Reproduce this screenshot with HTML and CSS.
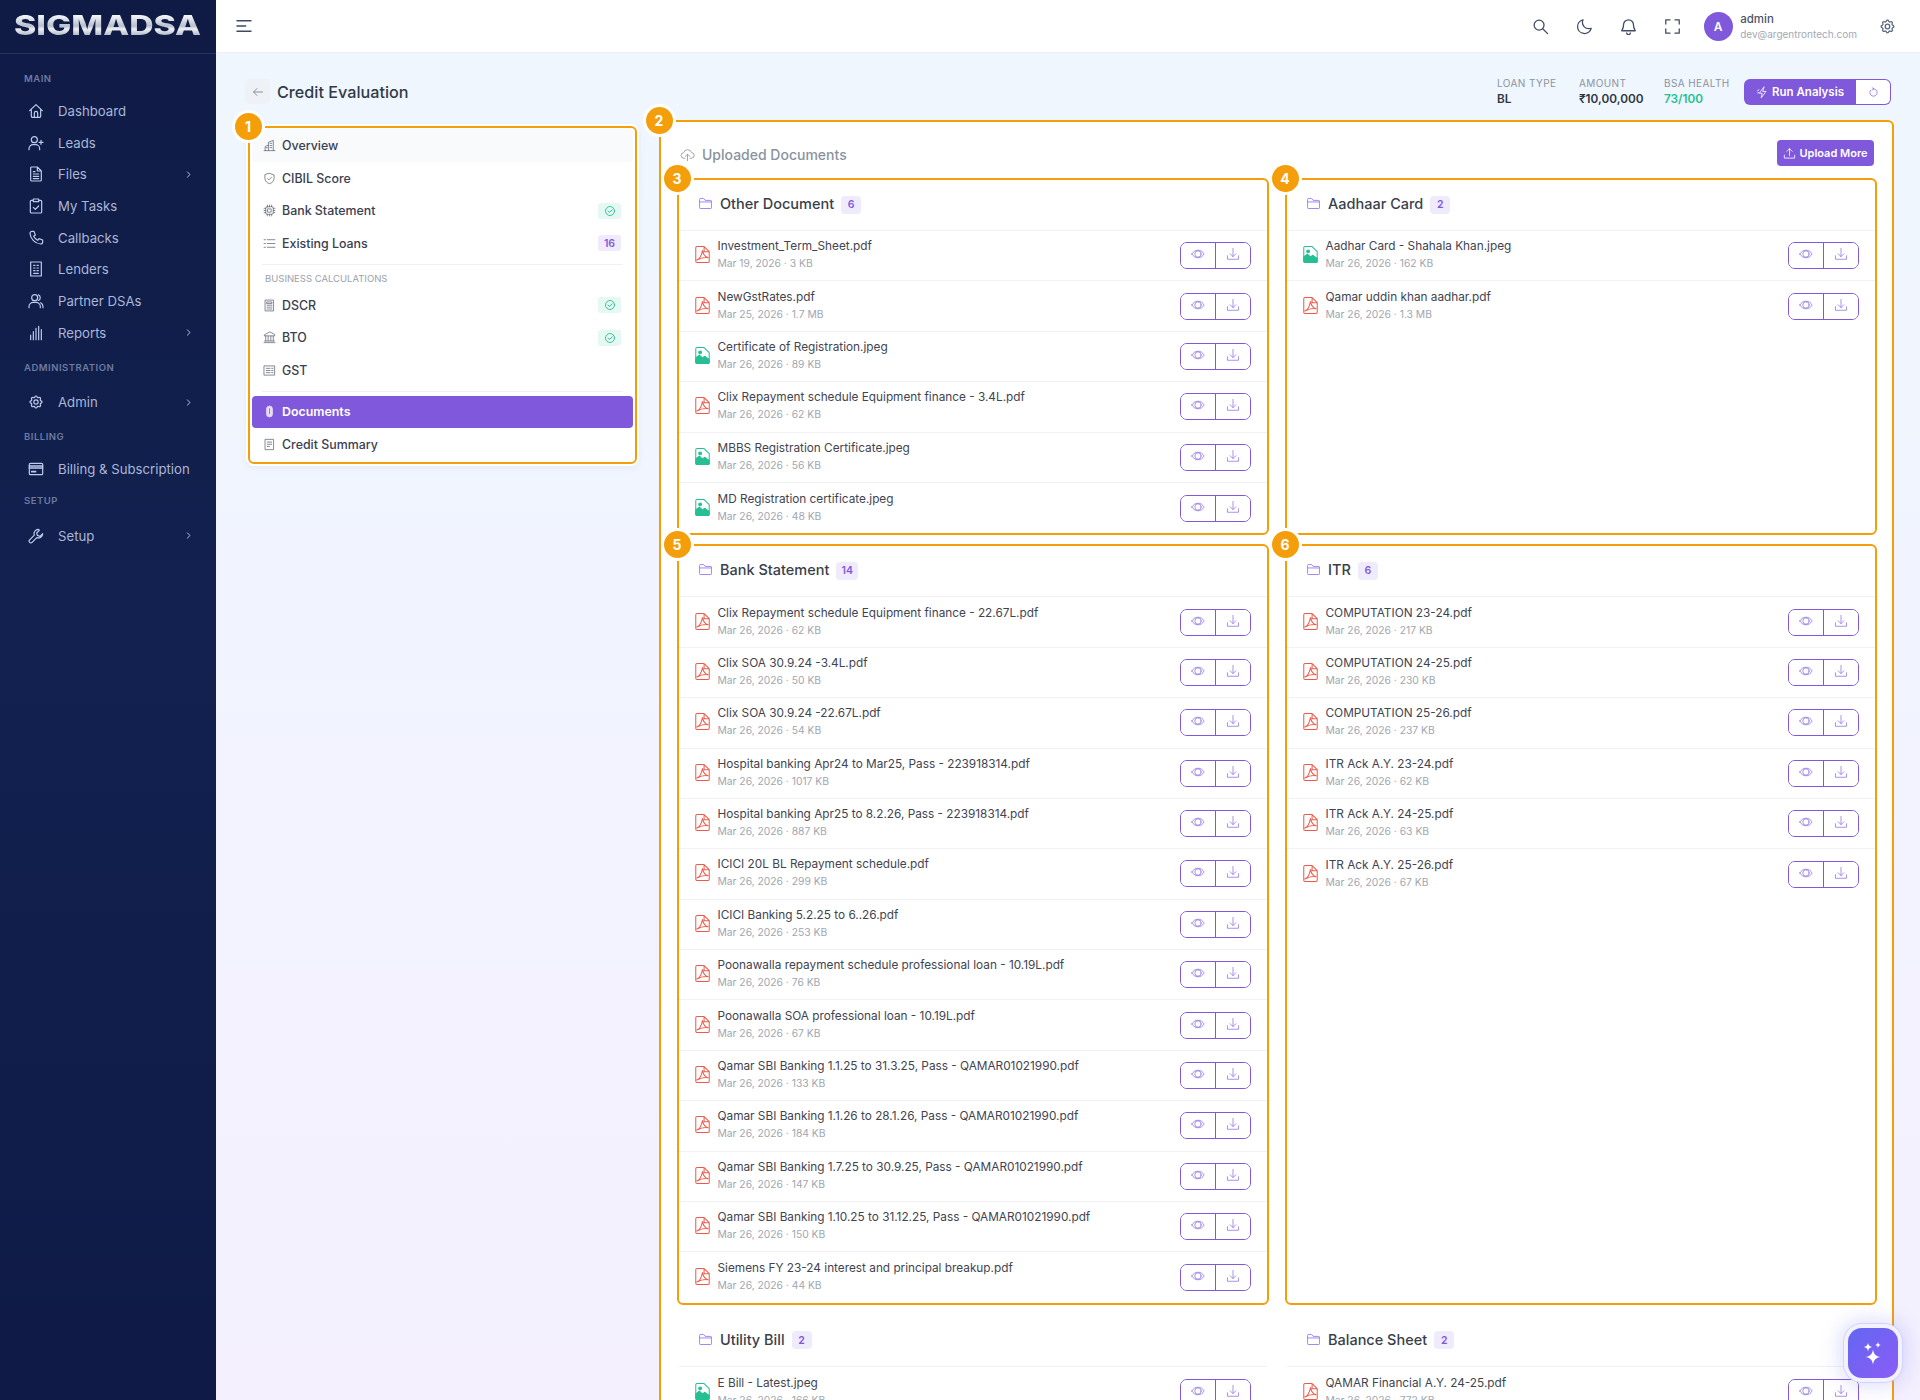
FILE: index.html
```html
<!DOCTYPE html>
<html lang="en">
<head>
    <meta charset="UTF-8">
    <meta name="viewport" content="width=device-width, initial-scale=1.0">
    <title>Credit Evaluation</title>
    <link rel="stylesheet" href="styles.css">
</head>
<body>

<svg class="icon-sprite" xmlns="http://www.w3.org/2000/svg">
    <symbol id="i-home" viewBox="0 0 24 24"><path d="M2.5 11.5 12 2.500l9.500 9M5 9.500V20a1.500 1.500 0 0 0 1.500 1.500h11A1.500 1.500 0 0 0 19 20V9.500M9.500 21.500V15a2.500 2.500 0 0 1 5 0v6.500"/></symbol>
    <symbol id="i-user-plus" viewBox="0 0 24 24"><circle cx="9.500" cy="7" r="4.500"/><path d="M1.500 22v-1.500a6 6 0 0 1 6-6h4a6 6 0 0 1 6 6V22M19.500 8v6M16.500 11h6"/></symbol>
    <symbol id="i-file" viewBox="0 0 24 24"><path d="M14 1.500H5.500A1.500 1.500 0 0 0 4 3v18a1.500 1.500 0 0 0 1.500 1.500h13A1.500 1.500 0 0 0 20 21V7.500zM14 1.500v6h6M8 12h8M8 15.500h8M8 19h8M8 8.500h2.500"/></symbol>
    <symbol id="i-task" viewBox="0 0 24 24"><path d="M8 3.500H5A1.500 1.500 0 0 0 3.500 5v16A1.500 1.500 0 0 0 5 22.500h14a1.500 1.500 0 0 0 1.500-1.500V5A1.500 1.500 0 0 0 19 3.500h-3M8 1.500h8v4H8zM8 14l3 3 5-5"/></symbol>
    <symbol id="i-phone" viewBox="0 0 24 24"><path d="M6 2h3l2 5.500-2.500 2a13 13 0 0 0 6 6l2-2.500 5.500 2v3a3 3 0 0 1-3 3C10.500 20.500 3.500 13.500 3 5a3 3 0 0 1 3-3z"/></symbol>
    <symbol id="i-building" viewBox="0 0 24 24"><path d="M4 1.500h16v21H4zM8.500 6.500h2M13.500 6.500h2M8.500 10.500h2M13.500 10.500h2M8.500 14.500h2M13.500 14.500h2M8.500 18.500h7"/></symbol>
    <symbol id="i-users" viewBox="0 0 24 24"><circle cx="10" cy="7" r="4.500"/><path d="M1.500 22v-1.500a6.500 6.500 0 0 1 6.500-6.500h4a6.500 6.500 0 0 1 6.500 6.500V22M15.500 2.800a4.500 4.500 0 0 1 0 8.400M19 14.500a6.500 6.500 0 0 1 3.500 6V22"/></symbol>
    <symbol id="i-bars" viewBox="0 0 24 24"><path d="M4 22v-7M8 22V10M12 22V5M16 22V2M20 22V7"/></symbol>
    <symbol id="i-gear" viewBox="0 0 24 24"><path d="M10.325 4.317c.426-1.756 2.924-1.756 3.350 0a1.724 1.724 0 0 0 2.573 1.066c1.543-.94 3.310.826 2.370 2.370a1.724 1.724 0 0 0 1.065 2.572c1.756.426 1.756 2.924 0 3.350a1.724 1.724 0 0 0-1.066 2.573c.94 1.543-.826 3.310-2.370 2.370a1.724 1.724 0 0 0-2.572 1.065c-.426 1.756-2.924 1.756-3.350 0a1.724 1.724 0 0 0-2.573-1.066c-1.543.94-3.310-.826-2.370-2.370a1.724 1.724 0 0 0-1.065-2.572c-1.756-.426-1.756-2.924 0-3.350a1.724 1.724 0 0 0 1.066-2.573c-.94-1.543.826-3.310 2.370-2.370 1 .608 2.296.07 2.572-1.065z"/><circle cx="12" cy="12" r="3.200"/></symbol>
    <symbol id="i-card" viewBox="0 0 24 24"><rect x="2" y="3.500" width="20" height="17" rx="1.500"/><path d="M2 7.500h20M2 10.500h20M5.500 16h6" stroke-width="2.400"/></symbol>
    <symbol id="i-wrench" viewBox="0 0 24 24"><path d="M15.500 2a6.500 6.500 0 0 0-6 8.800L2.500 17.800a2.600 2.600 0 0 0 3.700 3.700l7-7A6.500 6.500 0 0 0 22 8.500l-4 4-4-1.500-1-3.500 4-4a6.500 6.500 0 0 0-1.500-1.500z"/></symbol>
    <symbol id="i-chevron" viewBox="0 0 24 24"><path d="m9 5 7 7-7 7"/></symbol>
    <symbol id="i-menu" viewBox="0 0 24 24"><path d="M1.500 4h21M1.500 12h13M1.500 20h21"/></symbol>
    <symbol id="i-search" viewBox="0 0 24 24"><circle cx="10" cy="10" r="7"/><path d="m15.500 15.500 6.500 6.500"/></symbol>
    <symbol id="i-moon" viewBox="0 0 24 24"><path d="M10 2.500a9.800 9.800 0 1 0 11.500 12c-1 .4-2.200.6-3.500.6a9 9 0 0 1-9-9c0-1.300.4-2.500 1-3.600z"/></symbol>
    <symbol id="i-bell" viewBox="0 0 24 24"><path d="M12 2.500a7 7 0 0 0-7 7c0 5.500-2.500 7.500-2.500 8.500h19c0-1-2.500-3-2.500-8.500a7 7 0 0 0-7-7zM9.500 21a2.500 2.500 0 0 0 5 0"/></symbol>
    <symbol id="i-full" viewBox="0 0 24 24"><path d="M2.500 8.500v-6h6M15.500 2.500h6v6M21.500 15.500v6h-6M8.500 21.500h-6v-6"/></symbol>
    <symbol id="i-arrow" viewBox="0 0 24 24"><path d="M21 12H4M10 5l-7 7 7 7"/></symbol>
    <symbol id="i-chart" viewBox="0 0 24 24"><path d="M2 21.500h20M4 21v-7l6-3v10M10 11V6l9-3.500V21M13 8h3M13 12h3M13 16h3M6 16h2"/></symbol>
    <symbol id="i-shield" viewBox="0 0 24 24"><path d="M12 2.500 20.500 5.500v6c0 5-3.500 8.500-8.500 10-5-1.500-8.500-5-8.500-10v-6zM8.500 12l2.500 2.500 4.500-4.500"/></symbol>
    <symbol id="i-chip" viewBox="0 0 24 24"><rect x="5" y="5" width="14" height="14" rx="3"/><rect x="9" y="9" width="6" height="6"/><path d="M8 2v3M12 2v3M16 2v3M8 19v3M12 19v3M16 19v3M2 8h3M2 12h3M2 16h3M19 8h3M19 12h3M19 16h3"/></symbol>
    <symbol id="i-list" viewBox="0 0 24 24"><path d="M8 5h14M8 12h14M8 19h14M2 5h2.500M2 12h2.500M2 19h2.500"/></symbol>
    <symbol id="i-calc" viewBox="0 0 24 24"><path d="M4.500 2h15v20h-15zM7.500 5.500h9v3h-9zM7.500 11.500h2M11 11.500h2M14.500 11.500h2M7.500 15h2M11 15h2M14.500 15h2M7.500 18.500h2M11 18.500h2M14.500 18.500h2"/></symbol>
    <symbol id="i-bank" viewBox="0 0 24 24"><path d="M12 2 2.500 7v2h19V7zM5 9.500V18M9.500 9.500V18M14.500 9.500V18M19 9.500V18M3 18.500h18M2 21.500h20"/></symbol>
    <symbol id="i-receipt" viewBox="0 0 24 24"><path d="M2.500 3.500h19v17h-19zM6 8h7M6 12h7M6 16h7M16 8h2.500M16 12h2.500M16 16h2.500"/></symbol>
    <symbol id="i-clip" viewBox="0 0 24 24"><rect x="6.500" y="2" width="11" height="20" rx="5.500" fill="currentColor"/><path d="M12 7v9" stroke="#8058dc"/></symbol>
    <symbol id="i-note" viewBox="0 0 24 24"><path d="M4.500 2.500h15v19h-15zM8 7.500h8M8 11.500h8M8 15.500h4"/></symbol>
    <symbol id="i-check" viewBox="0 0 24 24"><circle cx="12" cy="12" r="9"/><path d="m8 12 3 3 5.500-5.500"/></symbol>
    <symbol id="i-cloud" viewBox="0 0 24 24"><path d="M8 18H6.500a4.500 4.500 0 0 1-.5-9 6.500 6.500 0 0 1 12.500 0 4.500 4.500 0 0 1-.5 9H16M12 22v-10M8.500 15l3.500-3.500 3.500 3.500"/></symbol>
    <symbol id="i-upload" viewBox="0 0 24 24"><path d="M2.500 15v5.500h19V15M12 16V3M7 8l5-5 5 5"/></symbol>
    <symbol id="i-bolt" viewBox="0 0 24 24"><path d="M14.500 2 6 13.500h5.500L9.500 22 18.500 10H13zM2.500 9l3-2M3 13l2-1"/></symbol>
    <symbol id="i-refresh" viewBox="0 0 24 24"><path d="M12 4a8 8 0 1 1-6.500 3.300M12 4l-3-2.500M12 4 9.500 7"/></symbol>
    <symbol id="i-folder" viewBox="0 0 24 24"><path d="M2.500 5a1 1 0 0 1 1-1h5.500l2.500 3h9a1 1 0 0 1 1 1v11a1 1 0 0 1-1 1h-17a1 1 0 0 1-1-1zM2.500 9.500h19"/></symbol>
    <symbol id="i-pdf" viewBox="0 0 24 24"><path d="M14 2H5a1.500 1.500 0 0 0-1.500 1.500v17A1.500 1.500 0 0 0 5 22h14a1.500 1.500 0 0 0 1.500-1.500V8.500zM14 2v6.500h6.500M5 19c2.500-1 5.500-5 7-12 1 5 3.500 8 7 9-4-.5-9 0-14 3z"/></symbol>
    <symbol id="i-image" viewBox="0 0 24 24"><path d="M14 2H5a1.500 1.500 0 0 0-1.500 1.500v17A1.500 1.500 0 0 0 5 22h14a1.500 1.500 0 0 0 1.500-1.500V8.500z"/><path d="M3.500 15 8 11.500l4 3.500 3-2 5.500 4v3.500a1.500 1.500 0 0 1-1.500 1.500H5a1.500 1.500 0 0 1-1.500-1.500z" fill="currentColor"/><circle cx="9" cy="8" r="1.800" fill="currentColor"/></symbol>
    <symbol id="i-eye" viewBox="0 0 24 24"><path d="M1.500 12c2.500-4.200 6-6.500 10.500-6.500s8 2.300 10.500 6.500c-2.500 4.200-6 6.500-10.500 6.500S4 16.200 1.500 12z"/><circle cx="12" cy="12" r="5.500"/></symbol>
    <symbol id="i-download" viewBox="0 0 24 24"><path d="M2.500 15v6h19v-6M12 2.500V16M7 11.500l5 5 5-5"/></symbol>
    <symbol id="i-sparkle" viewBox="0 0 24 24"><path d="M12 8.700c.6 4.200 2.800 6.400 7 7-4.200.6-6.400 2.800-7 7-.6-4.200-2.800-6.400-7-7 4.200-.6 6.400-2.800 7-7zM7.400 2.500c.4 2.400 1.600 3.600 4 4-2.400.4-3.600 1.600-4 4-.4-2.400-1.600-3.600-4-4 2.400-.4 3.600-1.600 4-4zM16.600 1.800c.3 1.700 1.100 2.500 2.800 2.800-1.700.3-2.500 1.100-2.800 2.800-.3-1.700-1.100-2.500-2.800-2.800 1.700-.3 2.500-1.100 2.800-2.800z"/></symbol>
</svg>

<div class="shell">
    <aside class="sidebar">
        <div class="logo"><span class="logo-text">SIGMADSA</span></div>
        <nav class="side-nav">
            <div class="side-label label-main">MAIN</div>
            <a class="side-link"><svg><use href="#i-home"/></svg>Dashboard</a>
            <a class="side-link"><svg><use href="#i-user-plus"/></svg>Leads</a>
            <a class="side-link"><svg><use href="#i-file"/></svg>Files<svg class="chev"><use href="#i-chevron"/></svg></a>
            <a class="side-link"><svg><use href="#i-task"/></svg>My Tasks</a>
            <a class="side-link"><svg><use href="#i-phone"/></svg>Callbacks</a>
            <a class="side-link"><svg><use href="#i-building"/></svg>Lenders</a>
            <a class="side-link"><svg><use href="#i-users"/></svg>Partner DSAs</a>
            <a class="side-link"><svg><use href="#i-bars"/></svg>Reports<svg class="chev"><use href="#i-chevron"/></svg></a>
            <div class="side-label label-admin">ADMINISTRATION</div>
            <a class="side-link"><svg><use href="#i-gear"/></svg>Admin<svg class="chev"><use href="#i-chevron"/></svg></a>
            <div class="side-label label-billing">BILLING</div>
            <a class="side-link"><svg><use href="#i-card"/></svg>Billing &amp; Subscription</a>
            <div class="side-label label-setup">SETUP</div>
            <a class="side-link"><svg><use href="#i-wrench"/></svg>Setup<svg class="chev"><use href="#i-chevron"/></svg></a>
        </nav>
    </aside>

    <div class="main">
        <header class="topbar">
            <svg class="menu-icon"><use href="#i-menu"/></svg>
            <div class="topbar-right">
                <svg class="top-icon"><use href="#i-search"/></svg>
                <svg class="top-icon"><use href="#i-moon"/></svg>
                <svg class="top-icon"><use href="#i-bell"/></svg>
                <svg class="top-icon"><use href="#i-full"/></svg>
                <div class="profile">
                    <div class="avatar">A</div>
                    <div>
                        <div class="profile-name">admin</div>
                        <div class="profile-mail">dev@argentrontech.com</div>
                    </div>
                </div>
                <svg class="top-icon gear"><use href="#i-gear"/></svg>
            </div>
        </header>

        <div class="content">
            <div class="page-head">
                <div class="page-title">
                    <span class="back-btn"><svg><use href="#i-arrow"/></svg></span>
                    <h1>Credit Evaluation</h1>
                </div>
                <div class="page-stats">
                    <div class="stat stat-loan"><span>LOAN TYPE</span><strong>BL</strong></div>
                    <div class="stat stat-amount"><span>AMOUNT</span><strong>₹10,00,000</strong></div>
                    <div class="stat stat-health"><span>BSA HEALTH</span><strong class="good">73/100</strong></div>
                    <div class="run-group">
                        <button class="run-btn"><svg><use href="#i-bolt"/></svg>Run Analysis</button>
                        <button class="refresh-btn"><svg><use href="#i-refresh"/></svg></button>
                    </div>
                </div>
            </div>

            <div class="columns">
                <div class="credit-nav marked">
                    <span class="pin">1</span>
                    <a class="nav-row nav-hover"><svg><use href="#i-chart"/></svg>Overview</a>
                    <a class="nav-row"><svg><use href="#i-shield"/></svg>CIBIL Score</a>
                    <a class="nav-row"><svg><use href="#i-chip"/></svg>Bank Statement<span class="tag tag-ok"><svg><use href="#i-check"/></svg></span></a>
                    <a class="nav-row"><svg><use href="#i-list"/></svg>Existing Loans<span class="tag">16</span></a>
                    <div class="nav-sep"></div>
                    <div class="nav-label">BUSINESS CALCULATIONS</div>
                    <a class="nav-row"><svg><use href="#i-calc"/></svg>DSCR<span class="tag tag-ok"><svg><use href="#i-check"/></svg></span></a>
                    <a class="nav-row"><svg><use href="#i-bank"/></svg>BTO<span class="tag tag-ok"><svg><use href="#i-check"/></svg></span></a>
                    <a class="nav-row"><svg><use href="#i-receipt"/></svg>GST</a>
                    <div class="nav-sep nav-sep-low"></div>
                    <a class="nav-row nav-active"><svg><use href="#i-clip"/></svg>Documents</a>
                    <a class="nav-row"><svg><use href="#i-note"/></svg>Credit Summary</a>
                </div>

                <section class="docs marked">
                    <span class="pin">2</span>
                    <div class="docs-head">
                        <div class="docs-title"><svg><use href="#i-cloud"/></svg>Uploaded Documents</div>
                        <button class="upload-btn"><svg><use href="#i-upload"/></svg>Upload More</button>
                    </div>

                    <div class="doc-grid">
                        <div class="doc-card marked">
                            <span class="pin">3</span>
                            <div class="card-head"><svg><use href="#i-folder"/></svg><h2>Other Document</h2><span class="count">6</span></div>
                            <ul class="doc-list">
                                <li class="doc-row"><svg class="file pdf"><use href="#i-pdf"/></svg><div class="doc-info"><div class="doc-name">Investment_Term_Sheet.pdf</div><div class="doc-meta">Mar 19, 2026 · 3 KB</div></div><div class="doc-actions"><button><svg><use href="#i-eye"/></svg></button><button><svg><use href="#i-download"/></svg></button></div></li>
                                <li class="doc-row"><svg class="file pdf"><use href="#i-pdf"/></svg><div class="doc-info"><div class="doc-name">NewGstRates.pdf</div><div class="doc-meta">Mar 25, 2026 · 1.7 MB</div></div><div class="doc-actions"><button><svg><use href="#i-eye"/></svg></button><button><svg><use href="#i-download"/></svg></button></div></li>
                                <li class="doc-row"><svg class="file img"><use href="#i-image"/></svg><div class="doc-info"><div class="doc-name">Certificate of Registration.jpeg</div><div class="doc-meta">Mar 26, 2026 · 89 KB</div></div><div class="doc-actions"><button><svg><use href="#i-eye"/></svg></button><button><svg><use href="#i-download"/></svg></button></div></li>
                                <li class="doc-row"><svg class="file pdf"><use href="#i-pdf"/></svg><div class="doc-info"><div class="doc-name">Clix Repayment schedule Equipment finance - 3.4L.pdf</div><div class="doc-meta">Mar 26, 2026 · 62 KB</div></div><div class="doc-actions"><button><svg><use href="#i-eye"/></svg></button><button><svg><use href="#i-download"/></svg></button></div></li>
                                <li class="doc-row"><svg class="file img"><use href="#i-image"/></svg><div class="doc-info"><div class="doc-name">MBBS Registration Certificate.jpeg</div><div class="doc-meta">Mar 26, 2026 · 56 KB</div></div><div class="doc-actions"><button><svg><use href="#i-eye"/></svg></button><button><svg><use href="#i-download"/></svg></button></div></li>
                                <li class="doc-row"><svg class="file img"><use href="#i-image"/></svg><div class="doc-info"><div class="doc-name">MD Registration certificate.jpeg</div><div class="doc-meta">Mar 26, 2026 · 48 KB</div></div><div class="doc-actions"><button><svg><use href="#i-eye"/></svg></button><button><svg><use href="#i-download"/></svg></button></div></li>
                            </ul>
                        </div>

                        <div class="doc-card marked">
                            <span class="pin">4</span>
                            <div class="card-head"><svg><use href="#i-folder"/></svg><h2>Aadhaar Card</h2><span class="count">2</span></div>
                            <ul class="doc-list">
                                <li class="doc-row"><svg class="file img"><use href="#i-image"/></svg><div class="doc-info"><div class="doc-name">Aadhar Card - Shahala Khan.jpeg</div><div class="doc-meta">Mar 26, 2026 · 162 KB</div></div><div class="doc-actions"><button><svg><use href="#i-eye"/></svg></button><button><svg><use href="#i-download"/></svg></button></div></li>
                                <li class="doc-row"><svg class="file pdf"><use href="#i-pdf"/></svg><div class="doc-info"><div class="doc-name">Qamar uddin khan aadhar.pdf</div><div class="doc-meta">Mar 26, 2026 · 1.3 MB</div></div><div class="doc-actions"><button><svg><use href="#i-eye"/></svg></button><button><svg><use href="#i-download"/></svg></button></div></li>
                            </ul>
                        </div>

                        <div class="doc-card marked">
                            <span class="pin">5</span>
                            <div class="card-head"><svg><use href="#i-folder"/></svg><h2>Bank Statement</h2><span class="count">14</span></div>
                            <ul class="doc-list">
                                <li class="doc-row"><svg class="file pdf"><use href="#i-pdf"/></svg><div class="doc-info"><div class="doc-name">Clix Repayment schedule Equipment finance - 22.67L.pdf</div><div class="doc-meta">Mar 26, 2026 · 62 KB</div></div><div class="doc-actions"><button><svg><use href="#i-eye"/></svg></button><button><svg><use href="#i-download"/></svg></button></div></li>
                                <li class="doc-row"><svg class="file pdf"><use href="#i-pdf"/></svg><div class="doc-info"><div class="doc-name">Clix SOA 30.9.24 -3.4L.pdf</div><div class="doc-meta">Mar 26, 2026 · 50 KB</div></div><div class="doc-actions"><button><svg><use href="#i-eye"/></svg></button><button><svg><use href="#i-download"/></svg></button></div></li>
                                <li class="doc-row"><svg class="file pdf"><use href="#i-pdf"/></svg><div class="doc-info"><div class="doc-name">Clix SOA 30.9.24 -22.67L.pdf</div><div class="doc-meta">Mar 26, 2026 · 54 KB</div></div><div class="doc-actions"><button><svg><use href="#i-eye"/></svg></button><button><svg><use href="#i-download"/></svg></button></div></li>
                                <li class="doc-row"><svg class="file pdf"><use href="#i-pdf"/></svg><div class="doc-info"><div class="doc-name">Hospital banking Apr24 to Mar25, Pass - 223918314.pdf</div><div class="doc-meta">Mar 26, 2026 · 1017 KB</div></div><div class="doc-actions"><button><svg><use href="#i-eye"/></svg></button><button><svg><use href="#i-download"/></svg></button></div></li>
                                <li class="doc-row"><svg class="file pdf"><use href="#i-pdf"/></svg><div class="doc-info"><div class="doc-name">Hospital banking Apr25 to 8.2.26, Pass - 223918314.pdf</div><div class="doc-meta">Mar 26, 2026 · 887 KB</div></div><div class="doc-actions"><button><svg><use href="#i-eye"/></svg></button><button><svg><use href="#i-download"/></svg></button></div></li>
                                <li class="doc-row"><svg class="file pdf"><use href="#i-pdf"/></svg><div class="doc-info"><div class="doc-name">ICICI 20L BL Repayment schedule.pdf</div><div class="doc-meta">Mar 26, 2026 · 299 KB</div></div><div class="doc-actions"><button><svg><use href="#i-eye"/></svg></button><button><svg><use href="#i-download"/></svg></button></div></li>
                                <li class="doc-row"><svg class="file pdf"><use href="#i-pdf"/></svg><div class="doc-info"><div class="doc-name">ICICI Banking 5.2.25 to 6..26.pdf</div><div class="doc-meta">Mar 26, 2026 · 253 KB</div></div><div class="doc-actions"><button><svg><use href="#i-eye"/></svg></button><button><svg><use href="#i-download"/></svg></button></div></li>
                                <li class="doc-row"><svg class="file pdf"><use href="#i-pdf"/></svg><div class="doc-info"><div class="doc-name">Poonawalla repayment schedule professional loan - 10.19L.pdf</div><div class="doc-meta">Mar 26, 2026 · 76 KB</div></div><div class="doc-actions"><button><svg><use href="#i-eye"/></svg></button><button><svg><use href="#i-download"/></svg></button></div></li>
                                <li class="doc-row"><svg class="file pdf"><use href="#i-pdf"/></svg><div class="doc-info"><div class="doc-name">Poonawalla SOA professional loan - 10.19L.pdf</div><div class="doc-meta">Mar 26, 2026 · 67 KB</div></div><div class="doc-actions"><button><svg><use href="#i-eye"/></svg></button><button><svg><use href="#i-download"/></svg></button></div></li>
                                <li class="doc-row"><svg class="file pdf"><use href="#i-pdf"/></svg><div class="doc-info"><div class="doc-name">Qamar SBI Banking 1.1.25 to 31.3.25, Pass - QAMAR01021990.pdf</div><div class="doc-meta">Mar 26, 2026 · 133 KB</div></div><div class="doc-actions"><button><svg><use href="#i-eye"/></svg></button><button><svg><use href="#i-download"/></svg></button></div></li>
                                <li class="doc-row"><svg class="file pdf"><use href="#i-pdf"/></svg><div class="doc-info"><div class="doc-name">Qamar SBI Banking 1.1.26 to 28.1.26, Pass - QAMAR01021990.pdf</div><div class="doc-meta">Mar 26, 2026 · 184 KB</div></div><div class="doc-actions"><button><svg><use href="#i-eye"/></svg></button><button><svg><use href="#i-download"/></svg></button></div></li>
                                <li class="doc-row"><svg class="file pdf"><use href="#i-pdf"/></svg><div class="doc-info"><div class="doc-name">Qamar SBI Banking 1.7.25 to 30.9.25, Pass - QAMAR01021990.pdf</div><div class="doc-meta">Mar 26, 2026 · 147 KB</div></div><div class="doc-actions"><button><svg><use href="#i-eye"/></svg></button><button><svg><use href="#i-download"/></svg></button></div></li>
                                <li class="doc-row"><svg class="file pdf"><use href="#i-pdf"/></svg><div class="doc-info"><div class="doc-name">Qamar SBI Banking 1.10.25 to 31.12.25, Pass - QAMAR01021990.pdf</div><div class="doc-meta">Mar 26, 2026 · 150 KB</div></div><div class="doc-actions"><button><svg><use href="#i-eye"/></svg></button><button><svg><use href="#i-download"/></svg></button></div></li>
                                <li class="doc-row"><svg class="file pdf"><use href="#i-pdf"/></svg><div class="doc-info"><div class="doc-name">Siemens FY 23-24 interest and principal breakup.pdf</div><div class="doc-meta">Mar 26, 2026 · 44 KB</div></div><div class="doc-actions"><button><svg><use href="#i-eye"/></svg></button><button><svg><use href="#i-download"/></svg></button></div></li>
                            </ul>
                        </div>

                        <div class="doc-card marked">
                            <span class="pin">6</span>
                            <div class="card-head"><svg><use href="#i-folder"/></svg><h2>ITR</h2><span class="count">6</span></div>
                            <ul class="doc-list">
                                <li class="doc-row"><svg class="file pdf"><use href="#i-pdf"/></svg><div class="doc-info"><div class="doc-name">COMPUTATION 23-24.pdf</div><div class="doc-meta">Mar 26, 2026 · 217 KB</div></div><div class="doc-actions"><button><svg><use href="#i-eye"/></svg></button><button><svg><use href="#i-download"/></svg></button></div></li>
                                <li class="doc-row"><svg class="file pdf"><use href="#i-pdf"/></svg><div class="doc-info"><div class="doc-name">COMPUTATION 24-25.pdf</div><div class="doc-meta">Mar 26, 2026 · 230 KB</div></div><div class="doc-actions"><button><svg><use href="#i-eye"/></svg></button><button><svg><use href="#i-download"/></svg></button></div></li>
                                <li class="doc-row"><svg class="file pdf"><use href="#i-pdf"/></svg><div class="doc-info"><div class="doc-name">COMPUTATION 25-26.pdf</div><div class="doc-meta">Mar 26, 2026 · 237 KB</div></div><div class="doc-actions"><button><svg><use href="#i-eye"/></svg></button><button><svg><use href="#i-download"/></svg></button></div></li>
                                <li class="doc-row"><svg class="file pdf"><use href="#i-pdf"/></svg><div class="doc-info"><div class="doc-name">ITR Ack A.Y. 23-24.pdf</div><div class="doc-meta">Mar 26, 2026 · 62 KB</div></div><div class="doc-actions"><button><svg><use href="#i-eye"/></svg></button><button><svg><use href="#i-download"/></svg></button></div></li>
                                <li class="doc-row"><svg class="file pdf"><use href="#i-pdf"/></svg><div class="doc-info"><div class="doc-name">ITR Ack A.Y. 24-25.pdf</div><div class="doc-meta">Mar 26, 2026 · 63 KB</div></div><div class="doc-actions"><button><svg><use href="#i-eye"/></svg></button><button><svg><use href="#i-download"/></svg></button></div></li>
                                <li class="doc-row"><svg class="file pdf"><use href="#i-pdf"/></svg><div class="doc-info"><div class="doc-name">ITR Ack A.Y. 25-26.pdf</div><div class="doc-meta">Mar 26, 2026 · 67 KB</div></div><div class="doc-actions"><button><svg><use href="#i-eye"/></svg></button><button><svg><use href="#i-download"/></svg></button></div></li>
                            </ul>
                        </div>

                        <div class="doc-card">
                            <div class="card-head"><svg><use href="#i-folder"/></svg><h2>Utility Bill</h2><span class="count">2</span></div>
                            <ul class="doc-list">
                                <li class="doc-row"><svg class="file img"><use href="#i-image"/></svg><div class="doc-info"><div class="doc-name">E Bill - Latest.jpeg</div><div class="doc-meta">Mar 26, 2026 · 166 KB</div></div><div class="doc-actions"><button><svg><use href="#i-eye"/></svg></button><button><svg><use href="#i-download"/></svg></button></div></li>
                            </ul>
                        </div>

                        <div class="doc-card">
                            <div class="card-head"><svg><use href="#i-folder"/></svg><h2>Balance Sheet</h2><span class="count">2</span></div>
                            <ul class="doc-list">
                                <li class="doc-row"><svg class="file pdf"><use href="#i-pdf"/></svg><div class="doc-info"><div class="doc-name">QAMAR Financial A.Y. 24-25.pdf</div><div class="doc-meta">Mar 26, 2026 · 772 KB</div></div><div class="doc-actions"><button><svg><use href="#i-eye"/></svg></button><button><svg><use href="#i-download"/></svg></button></div></li>
                            </ul>
                        </div>
                    </div>
                </section>
            </div>
        </div>
    </div>
</div>

<button class="ai-fab"><svg><use href="#i-sparkle"/></svg></button>

</body>
</html>
```

FILE: styles.css
```css
/* General Styles */
* {
    box-sizing: border-box;
}

html, body {
    height: 100%;
}

body {
    margin: 0;
    overflow: hidden;
    font-family: 'Inter', 'Liberation Sans', sans-serif;
    color: #2f3542;
}

svg {
    fill: none;
    stroke: currentColor;
    stroke-width: 1.5;
    stroke-linecap: round;
    stroke-linejoin: round;
    flex-shrink: 0;
}

button {
    font-family: inherit;
    border: none;
    padding: 0;
    cursor: pointer;
}

.icon-sprite {
    display: none;
}

.shell {
    display: flex;
    height: 1400px;
}

/* Sidebar */
.sidebar {
    width: 216px;
    flex-shrink: 0;
    background: linear-gradient(180deg, #0f1b45 0%, #122150 45%, #0f1a46 100%);
}

.logo {
    height: 54px;
    padding: 11px 0 0 14px;
    background: #0f1b45;
    border-bottom: 1px solid #26345f;
}

.logo-text {
    display: inline-block;
    font-size: 27px;
    line-height: 30px;
    font-weight: 800;
    transform: scaleX(1.25);
    transform-origin: left center;
    background: linear-gradient(180deg, #f4f6f9 15%, #b8c0cc 50%, #eef0f4 60%, #98a2b2 90%);
    -webkit-background-clip: text;
    background-clip: text;
    color: transparent;
}

.side-nav {
    padding-left: 24px;
}

.side-label {
    height: 11px;
    line-height: 11px;
    font-size: 9.5px;
    font-weight: 600;
    letter-spacing: 0.5px;
    color: #6d7ba0;
}

.label-main {
    margin: 18.5px 0 11.5px;
}

.label-admin {
    margin: 13.5px 0;
}

.label-billing {
    margin: 12.5px 0 11.5px;
}

.label-setup {
    margin: 10.5px 0 13.5px;
}

.side-link {
    display: flex;
    align-items: center;
    height: 31.7px;
    font-size: 13.2px;
    color: #aab6d6;
    white-space: nowrap;
}

.side-link svg {
    width: 16px;
    height: 16px;
    margin: 0 14px 0 4px;
    color: #bccaeb;
    stroke-width: 1.8;
}

.side-link .chev {
    width: 9px;
    height: 9px;
    margin: 0;
    position: absolute;
    left: 184px;
    stroke-width: 2.5;
}

/* Top bar */
.main {
    flex: 1;
    min-width: 0;
    display: flex;
    flex-direction: column;
    background: linear-gradient(180deg, #eff7fe 0%, #f4f0fe 100%);
}

.topbar {
    height: 53px;
    flex-shrink: 0;
    display: flex;
    align-items: center;
    justify-content: space-between;
    padding: 0 24px 0 20px;
    background: #fff;
    border-bottom: 1px solid #eef0f4;
}

.menu-icon {
    width: 16px;
    height: 16px;
    color: #3f4a63;
    stroke-width: 2.2;
}

.topbar-right {
    display: flex;
    align-items: center;
    color: #3f4a63;
}

.top-icon {
    width: 17px;
    height: 17px;
    margin-right: 27px;
    stroke-width: 1.8;
}

.profile {
    display: flex;
    align-items: center;
    gap: 7.5px;
    margin-left: -4px;
}

.avatar {
    width: 29px;
    height: 29px;
    border-radius: 50%;
    background: #8058dc;
    color: #fff;
    font-size: 12px;
    font-weight: 600;
    display: flex;
    align-items: center;
    justify-content: center;
}

.profile-name {
    font-size: 11.5px;
    font-weight: 500;
    line-height: 14px;
    margin-bottom: 1px;
    color: #4a5468;
}

.profile-mail {
    font-size: 10px;
    line-height: 14px;
    color: #a2a9b5;
}

.top-icon.gear {
    margin: 0 0 0 22px;
    color: #5a6781;
}

/* Page */
.content {
    padding: 26px 26px 0 29px;
}

.page-head {
    display: flex;
    justify-content: space-between;
    align-items: flex-start;
    height: 41px;
}

.page-title {
    display: flex;
    align-items: center;
    gap: 7px;
    height: 25px;
}

.back-btn {
    width: 25px;
    height: 25px;
    border-radius: 5px;
    background: #eef2f7;
    color: #6b7280;
    display: flex;
    align-items: center;
    justify-content: center;
}

.back-btn svg {
    width: 12px;
    height: 12px;
}

.page-title h1 {
    margin: 0;
    font-size: 16.2px;
    font-weight: 500;
    color: #333a47;
}

.page-stats {
    display: flex;
    margin-right: 3px;
}

.stat {
    display: flex;
    flex-direction: column;
    margin-top: -2px;
    font-size: 10px;
    letter-spacing: 0.4px;
    line-height: 12px;
}

.stat span {
    color: #8b93a1;
    margin-bottom: 3px;
}

.stat strong {
    font-size: 11.8px;
    line-height: 14px;
    font-weight: 600;
    letter-spacing: 0;
    color: #2f3542;
}

.stat .good {
    color: #26bf94;
}

.stat-loan {
    width: 82px;
}

.stat-amount {
    width: 85px;
}

.stat-health {
    width: 80px;
}

.run-group {
    display: flex;
    height: 26px;
}

.run-btn {
    width: 112px;
    border-radius: 6px 0 0 6px;
    background: #8058dc;
    color: #fff;
    font-size: 11.5px;
    font-weight: 600;
    display: flex;
    align-items: center;
    justify-content: center;
    gap: 3px;
}

.run-btn svg {
    width: 13px;
    height: 13px;
}

.refresh-btn {
    width: 35px;
    border: 1px solid #8058dc;
    border-left: none;
    border-radius: 0 6px 6px 0;
    background: #fff;
    color: #8058dc;
    display: flex;
    align-items: center;
    justify-content: center;
}

.refresh-btn svg {
    width: 11px;
    height: 11px;
}

.columns {
    display: flex;
    align-items: flex-start;
    gap: 22px;
}

/* Numbered marks laid over the boxes */
.marked {
    position: relative;
    border: 2px solid #f59e0b;
    border-radius: 6px;
}

.pin {
    position: absolute;
    left: -15.5px;
    top: -15.5px;
    width: 27px;
    height: 27px;
    border-radius: 50%;
    background: #f59e0b;
    color: #fff;
    box-shadow: 0 0 0 3px #fff;
    font-size: 14px;
    font-weight: 700;
    display: flex;
    align-items: center;
    justify-content: center;
    z-index: 2;
}

/* Left nav card */
.credit-nav {
    width: 389px;
    height: 338px;
    margin: 6px 0 0 3px;
    padding: 1px 2px 2px;
    background: #fff;
    box-shadow: 0 0 0 2px #fff, 0 2px 6px 2px rgba(40, 50, 80, 0.05);
}

.nav-row {
    display: flex;
    align-items: center;
    height: 32.7px;
    padding: 0 12px 0 11px;
    border-radius: 4px;
    font-size: 12.4px;
    font-weight: 500;
    color: #3a4050;
}

.nav-row > svg {
    width: 13px;
    height: 13px;
    margin-right: 6px;
    color: #5f6675;
    stroke-width: 1.4;
}

.nav-hover {
    background: #f9fafb;
}

.nav-active {
    height: 32px;
    background: #8058dc;
    color: #fff;
    font-weight: 600;
}

.nav-active > svg {
    color: #e6dcfa;
}

.tag {
    margin-left: auto;
    width: 23px;
    height: 16px;
    border-radius: 3px;
    background: #f0ebfc;
    color: #8058dc;
    font-size: 10.5px;
    font-weight: 600;
    display: flex;
    align-items: center;
    justify-content: center;
}

.tag-ok {
    background: #e6f8f2;
    color: #26bf94;
}

.tag svg {
    width: 12px;
    height: 12px;
    stroke-width: 1.8;
}

.nav-sep {
    height: 1px;
    margin: 4px 10px 0;
    background: #eef0f3;
}

.nav-sep-low {
    margin: 4px 10px;
}

.nav-label {
    height: 24px;
    padding: 8px 0 0 13px;
    font-size: 9.5px;
    line-height: 12px;
    color: #9aa1ad;
}

/* Documents card */
.docs {
    flex: 1;
    min-width: 0;
    padding: 0 16px 24px;
    background: #fff;
}

.docs-head {
    display: flex;
    align-items: center;
    justify-content: space-between;
    height: 56px;
    padding-top: 6px;
    padding-right: 2px;
}

.docs-title {
    display: flex;
    align-items: center;
    gap: 7px;
    padding: 2px 0 0 3px;
    font-size: 14px;
    font-weight: 500;
    color: #8a92a0;
}

.docs-title svg {
    width: 15px;
    height: 15px;
    stroke-width: 1.3;
}

.upload-btn {
    width: 97px;
    height: 26px;
    border-radius: 4px;
    background: #8058dc;
    color: #fff;
    font-size: 11px;
    font-weight: 600;
    display: flex;
    align-items: center;
    justify-content: center;
    gap: 3px;
}

.upload-btn svg {
    width: 13px;
    height: 13px;
}

.doc-grid {
    display: grid;
    grid-template-columns: 592px 592px;
    column-gap: 16px;
    row-gap: 9px;
}

.doc-card {
    border: 2px solid transparent;
    background: #fff;
}

.doc-card.marked {
    border-color: #f59e0b;
}

.card-head {
    display: flex;
    align-items: center;
    height: 51px;
    padding: 0 0 3px 19px;
    border-bottom: 1px solid #f0f1f4;
}

.card-head svg {
    width: 15px;
    height: 15px;
    margin-right: 7px;
    color: #a587f0;
    stroke-width: 1.6;
}

.card-head h2 {
    margin: 0;
    font-size: 14.5px;
    font-weight: 500;
    color: #3a3f4b;
}

.count {
    margin: 2px 0 0 7px;
    min-width: 20px;
    height: 18px;
    padding: 0 5px;
    border-radius: 4px;
    background: #f0ebfc;
    color: #8058dc;
    font-size: 10.5px;
    font-weight: 600;
    display: flex;
    align-items: center;
    justify-content: center;
}

.doc-list {
    list-style: none;
    margin: 0;
    padding: 0;
}

.doc-row {
    display: flex;
    align-items: center;
    height: 50.4px;
    padding: 0 16px 0 14px;
    border-bottom: 1px solid #f0f1f4;
}

.doc-row:last-child {
    border-bottom: none;
}

.file {
    width: 19px;
    height: 19px;
    margin: 0 5.5px 2px 0;
    stroke-width: 1.3;
}

.file.pdf {
    color: #ee5a4a;
}

.file.img {
    color: #26bf94;
}

.doc-info {
    flex: 1;
    min-width: 0;
    margin-top: -3px;
}

.doc-name {
    font-size: 11.8px;
    line-height: 16px;
    color: #3f4451;
    margin-bottom: 2px;
}

.doc-meta {
    font-size: 10.3px;
    line-height: 14px;
    color: #a0a6b1;
}

.doc-actions {
    display: flex;
    width: 71px;
    height: 27px;
    border: 1px solid #8058dc;
    border-radius: 7px;
    overflow: hidden;
}

.doc-actions button {
    flex: 1;
    background: #fff;
    color: #8f6fe3;
    display: flex;
    align-items: center;
    justify-content: center;
}

.doc-actions button + button {
    border-left: 1px solid #8058dc;
}

.doc-actions svg {
    width: 14px;
    height: 14px;
    margin-bottom: 3px;
    stroke-width: 1.3;
}

/* AI button */
.ai-fab {
    position: fixed;
    left: 1848px;
    top: 1328px;
    width: 50px;
    height: 50px;
    border-radius: 14px;
    background: linear-gradient(135deg, #6366f1, #8b5cf6);
    color: #fff;
    box-shadow: 0 0 0 4px #f2f1fe, 0 0 0 5px #d3d4fb, 0 0 20px 8px rgba(99, 102, 241, 0.22);
    display: flex;
    align-items: center;
    justify-content: center;
    z-index: 5;
}

.ai-fab svg {
    width: 26px;
    height: 26px;
    fill: #fff;
    stroke: none;
}
```
